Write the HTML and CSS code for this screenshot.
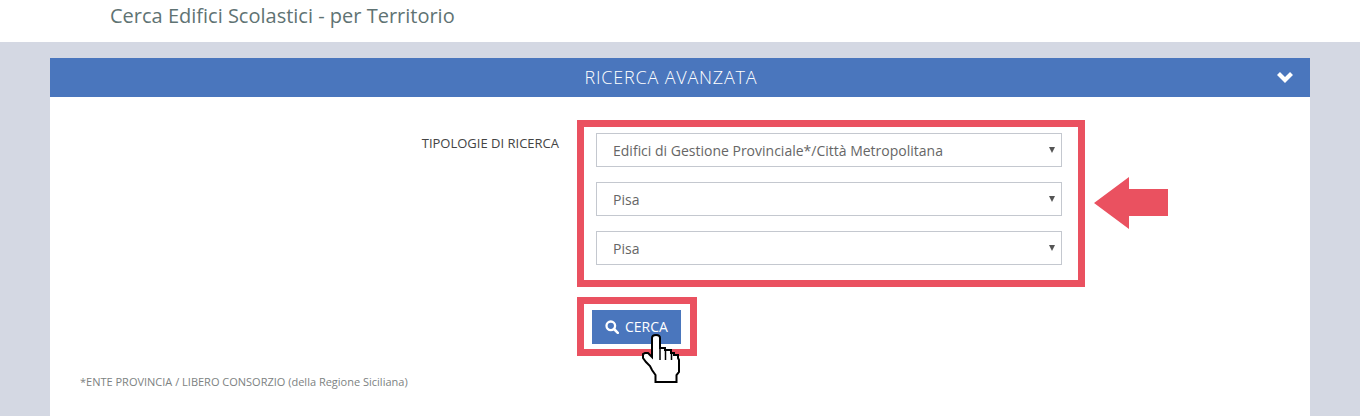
FILE: index.html
```html
<!DOCTYPE html>
<html>
<head>
    <title>Cerca Edifici Scolastici</title>
    <link rel="stylesheet" href="styles.css">
</head>
<body>
    <div class="top-bar">
        <h1>Cerca Edifici Scolastici - per Territorio</h1>
    </div>
    <div class="panel">
        <div class="panel-head">
            <span>RICERCA AVANZATA</span>
            <svg class="chevron" width="18" height="12" viewBox="0 0 18 12">
                <path d="M2.500 2.500L9 9l6.500-6.500" fill="none" stroke="#fff" stroke-width="4.200"/>
            </svg>
        </div>
        <div class="panel-body">
            <div class="search-row">
                <label class="field-label">TIPOLOGIE DI RICERCA</label>
                <div class="red-box selects">
                    <div class="select">Edifici di Gestione Provinciale*/Città Metropolitana<span class="caret"></span></div>
                    <div class="select">Pisa<span class="caret"></span></div>
                    <div class="select">Pisa<span class="caret"></span></div>
                </div>
                <svg class="arrow" width="74" height="52" viewBox="0 0 74 52">
                    <path d="M0 26L35 0V12H74V39H35V52Z" fill="#ea5160"/>
                </svg>
            </div>
            <div class="red-box button-box">
                <button type="button">
                    <svg width="14" height="14" viewBox="0 0 14 14">
                        <circle cx="5.800" cy="5.800" r="4.300" fill="none" stroke="#fff" stroke-width="2.300"/>
                        <path d="M9 9l3.800 3.800" stroke="#fff" stroke-width="2.600" stroke-linecap="round"/>
                    </svg>
                    <span class="button-label">CERCA</span>
                </button>
                <svg class="hand" width="38" height="50" viewBox="0 0 38 50">
                    <path d="M10 5Q10 2 14 2T18 5V15H23V17H29V20H32V22H36V25L37 27V39L34.500 42V49H13.500V42L10 37 8 33 4 29 1 25V21L3 20H6L10 24Z" fill="#fff" stroke="#000" stroke-width="2"/>
                    <path d="M18 15V27M23.500 17V27M29.500 20V27" fill="none" stroke="#000" stroke-width="1.500"/>
                </svg>
            </div>
            <p class="note">*ENTE PROVINCIA / LIBERO CONSORZIO (della Regione Siciliana)</p>
        </div>
    </div>
</body>
</html>
```

FILE: styles.css
```css
html, body {
    height: 100%;
}
body {
    margin: 0;
    background-color: #d4d8e3;
    font-family: "Open Sans", sans-serif;
    overflow: hidden;
}
.top-bar {
    height: 42px;
    padding-left: 110px;
    background-color: #fff;
}
h1 {
    margin: 0;
    font-size: 20px;
    font-weight: 400;
    line-height: 32px;
    color: #5f7373;
}
.panel {
    margin: 16px 50px 0;
    background-color: #fff;
    height: 358px;
}
.panel-head {
    position: relative;
    height: 39px;
    padding-right: 18px;
    line-height: 39px;
    text-align: center;
    font-size: 18px;
    font-weight: 300;
    letter-spacing: 0.8px;
    color: #fff;
    background-color: #4a76bd;
}
.chevron {
    position: absolute;
    top: 13px;
    right: 16px;
}
.panel-body {
    padding: 23px 0 0 30px;
}
.search-row {
    display: flex;
    align-items: flex-start;
}
.field-label {
    width: 479px;
    padding-top: 15px;
    box-sizing: border-box;
    text-align: right;
    font-size: 13px;
    line-height: 17px;
    color: #444;
}
.red-box {
    border: 7px solid #ea5160;
    box-sizing: border-box;
    background-color: #fff;
}
.selects {
    width: 508px;
    height: 167px;
    padding: 6px 16px 0 12px;
    margin-left: 18px;
}
.select {
    position: relative;
    height: 34px;
    margin-bottom: 15px;
    padding-left: 16px;
    box-sizing: border-box;
    border: 1px solid #c4c8cf;
    font-size: 14px;
    line-height: 34px;
    color: #666;
}
.caret {
    position: absolute;
    top: 13px;
    right: 6px;
    border-left: 3px solid transparent;
    border-right: 3px solid transparent;
    border-top: 6px solid #555;
}
.arrow {
    margin: 57px 0 0 9px;
}
.button-box {
    position: relative;
    width: 120px;
    height: 59px;
    margin: 10px 0 0 497px;
    padding: 6px 0 0 8px;
}
button {
    display: flex;
    align-items: center;
    gap: 6px;
    width: 89px;
    height: 34px;
    padding: 0 0 0 13px;
    border: none;
    background-color: #4a76bd;
    color: #fff;
    font-family: "Open Sans", sans-serif;
    font-size: 14px;
}
.button-label {
    margin-top: -2px;
}
.hand {
    position: absolute;
    top: 29px;
    left: 58px;
}
.note {
    margin: 17px 0 0;
    font-size: 11px;
    line-height: 18px;
    color: #7d8282;
}
```
